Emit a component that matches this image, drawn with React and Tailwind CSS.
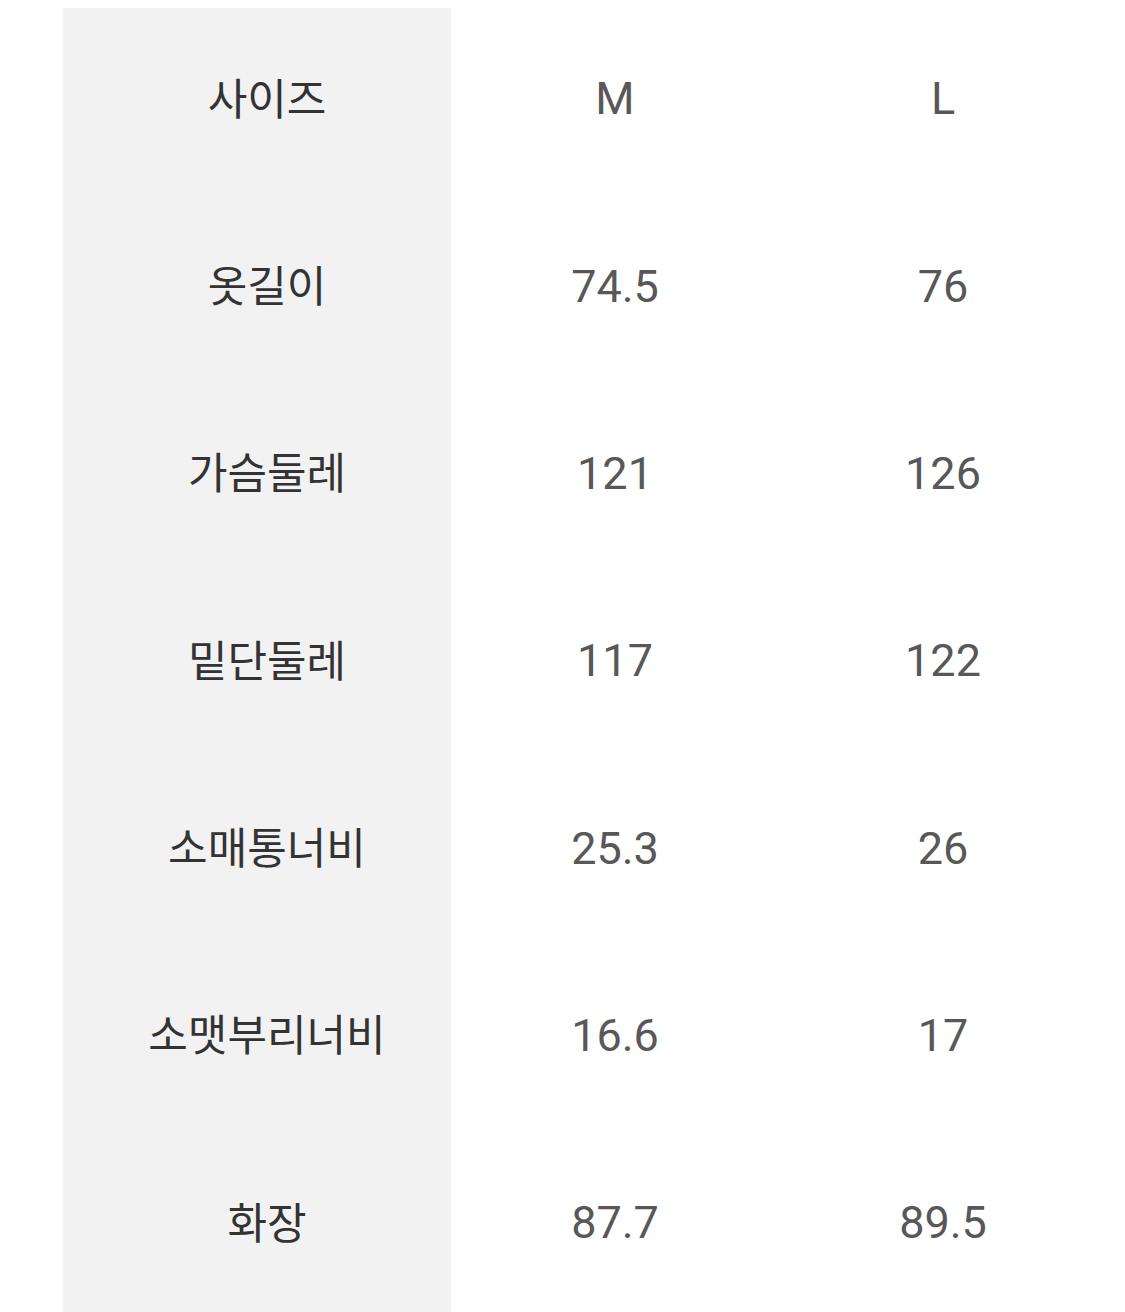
const rows = [
  ["사이즈", "M", "L"],
  ["옷길이", "74.5", "76"],
  ["가슴둘레", "121", "126"],
  ["밑단둘레", "117", "122"],
  ["소매통너비", "25.3", "26"],
  ["소맷부리너비", "16.6", "17"],
  ["화장", "87.7", "89.5"],
];

export default function App() {
  return (
    <div className="w-[1125px] h-[1312px] bg-white overflow-hidden pt-[8px] pl-[63px]">
      <div className="flex flex-col">
        {rows.map((r, i) => (
          <div key={i} className="flex h-[187.3px]">
            <div className="w-[388px] bg-[#f2f2f2] flex items-center justify-center pl-[20px] pb-[11px] text-[#333333] text-[43px] font-['Noto_Sans_CJK_KR','Noto_Sans',sans-serif]">
              {r[0]}
            </div>
            <div className="w-[328px] flex items-center justify-center pb-[5px] text-[#585858] text-[45px] font-['Roboto',sans-serif]">
              {r[1]}
            </div>
            <div className="w-[328px] flex items-center justify-center pb-[5px] text-[#585858] text-[45px] font-['Roboto',sans-serif]">
              {r[2]}
            </div>
          </div>
        ))}
        <div className="w-[388px] h-[40px] bg-[#f2f2f2]" />
      </div>
    </div>
  );
}
